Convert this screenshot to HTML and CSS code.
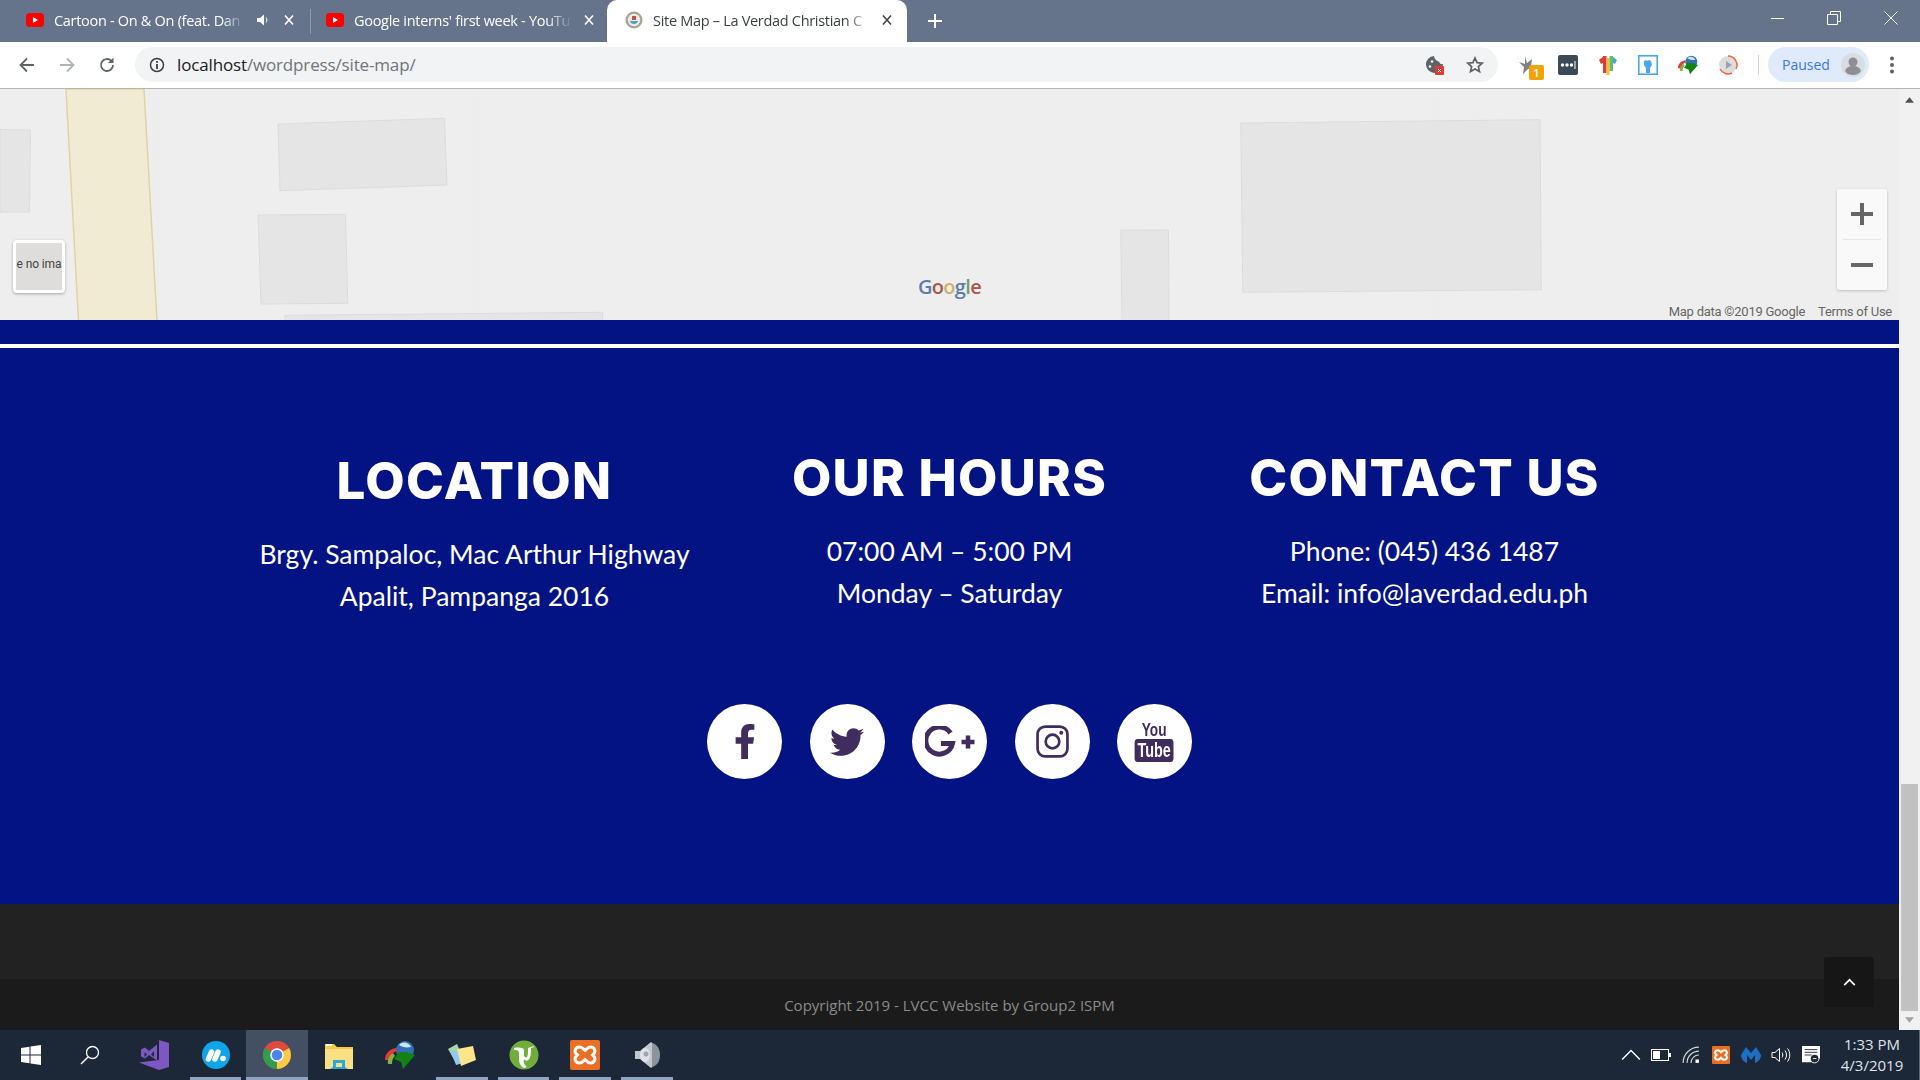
FILE: index.html
```html
<!DOCTYPE html>
<html lang="en">
<head>
    <meta charset="UTF-8">
    <title>Site Map – La Verdad Christian College</title>
    <link rel="stylesheet" href="styles.css">
</head>
<body>

<!-- browser tabs -->
<div class="tabbar">
    <div class="tab">
        <svg class="fav" viewBox="0 0 18 18"><rect y="2" width="18" height="14" rx="3.500" fill="#f00"/><path d="M7 6l5 3-5 3z" fill="#fff"/></svg>
        <span class="tab-title">Cartoon - On &amp; On (feat. Dan</span>
        <svg class="tab-audio" viewBox="0 0 14 14"><path d="M1 5h3l4-3.500v11L4 9H1z" fill="#fff"/><path d="M10 4.500c1.200 1.400 1.200 3.600 0 5" stroke="#fff" fill="none"/></svg>
        <svg class="tab-x" viewBox="0 0 12 12"><path d="M2 1.500l8 9M10 1.500l-8 9" stroke="#fff" stroke-width="1.600"/></svg>
    </div>
    <div class="tab tab-second">
        <svg class="fav" viewBox="0 0 18 18"><rect y="2" width="18" height="14" rx="3.500" fill="#f00"/><path d="M7 6l5 3-5 3z" fill="#fff"/></svg>
        <span class="tab-title">Google interns' first week - YouTu</span>
        <svg class="tab-x" viewBox="0 0 12 12"><path d="M2 1.500l8 9M10 1.500l-8 9" stroke="#fff" stroke-width="1.600"/></svg>
    </div>
    <div class="tab tab-active">
        <svg class="fav" viewBox="0 0 18 18"><circle cx="9" cy="9" r="8.500" fill="#a9a396"/><circle cx="9" cy="9" r="6.200" fill="#eeeae0"/><path d="M5 10h8c-.5 2-2 3-4 3s-3.500-1-4-3z" fill="#4f9bc4"/><path d="M7 5h4v4H7z" fill="#b5574f"/></svg>
        <span class="tab-title">Site Map – La Verdad Christian C</span>
        <svg class="tab-x" viewBox="0 0 12 12"><path d="M2 1.500l8 9M10 1.500l-8 9" stroke="#444" stroke-width="1.600"/></svg>
    </div>
    <svg class="tab-new" viewBox="0 0 16 16"><path d="M8 1v14M1 8h14" stroke="#fff" stroke-width="2"/></svg>
    <div class="window-btns">
        <svg viewBox="0 0 14 14"><path d="M1 7.500h13" stroke="#fff"/></svg>
        <svg viewBox="0 0 14 14"><path d="M.5 3.500h10v10H.5zM3.500 3.500V.5h10v10h-3" stroke="#fff" fill="none"/></svg>
        <svg viewBox="0 0 14 14"><path d="M.5.500l13 13M13.500.5l-13 13" stroke="#fff"/></svg>
    </div>
</div>

<!-- address bar -->
<div class="toolbar">
    <div class="nav-btns">
        <svg viewBox="0 0 18 18"><path d="M16 9H3M9 2.500L2.500 9 9 15.500" stroke="#5f6368" stroke-width="1.800" fill="none"/></svg>
        <svg viewBox="0 0 18 18"><path d="M2 9h13M9 2.500L15.500 9 9 15.500" stroke="#b1b4b8" stroke-width="1.800" fill="none"/></svg>
        <svg viewBox="0 0 18 18"><path d="M15 9a6 6 0 1 1-1.800-4.300" stroke="#5f6368" stroke-width="1.800" fill="none"/><path d="M15.500 1.500v5.500H10z" fill="#5f6368"/></svg>
    </div>
    <div class="omnibox">
        <svg class="omni-info" viewBox="0 0 16 16"><circle cx="8" cy="8" r="6.500" stroke="#3c4043" stroke-width="1.500" fill="none"/><path d="M8 7v5M8 4v1.800" stroke="#3c4043" stroke-width="1.800"/></svg>
        <span class="url"><span class="url-host">localhost</span>/wordpress/site-map/</span>
        <svg class="omni-cookie" viewBox="0 0 20 20"><path d="M9 1a8.500 8.500 0 1 0 9 8c-2 .5-3.500-.5-4-2.500C12 6.500 9.500 4 9 1z" fill="#5f6368"/><circle cx="7" cy="6.500" r="1.300" fill="#f1f3f4"/><circle cx="5" cy="11.500" r="1.300" fill="#f1f3f4"/><rect x="10" y="11" width="9" height="9" rx="1" fill="#e53935"/><path d="M13 14l3 3M16 14l-3 3" stroke="#fff"/></svg>
        <svg class="omni-star" viewBox="0 0 18 18"><path d="M9 2l2.100 4.700 5.100.5-3.800 3.400 1.100 5L9 13l-4.500 2.600 1.100-5L1.800 7.200l5.100-.5z" stroke="#5f6368" stroke-width="1.700" fill="none"/></svg>
    </div>
    <div class="ext-btns">
        <div class="ext">
            <svg viewBox="0 0 20 20"><path d="M7 1l2 7 5-4-1 7 3 1-6 2-5 5 1-7-5-5 6 2z" fill="#7d8288"/></svg>
            <span class="ext-badge">1</span>
        </div>
        <div class="ext"><svg viewBox="0 0 20 20"><rect width="20" height="20" rx="2" fill="#3b4a55"/><circle cx="4.500" cy="10" r="1.700" fill="#fff"/><circle cx="9" cy="10" r="1.700" fill="#fff"/><circle cx="13.500" cy="10" r="1.700" fill="#fff"/><path d="M17 6v8" stroke="#fff"/></svg></div>
        <div class="ext"><svg viewBox="0 0 20 20"><path d="M6 1L1 5l2 4 2-1z" fill="#e53935"/><path d="M14 1l5 4-2 4-2-1z" fill="#4aa3df"/><rect x="5" y="1" width="3.500" height="17" fill="#e53935"/><rect x="8.500" y="3" width="3" height="17" fill="#fbc02d"/><rect x="11.500" y="1" width="3.500" height="15" fill="#66bb6a"/></svg></div>
        <div class="ext"><svg viewBox="0 0 20 20"><rect x=".8" y=".8" width="18.400" height="18.400" fill="#fff" stroke="#4aa8ea" stroke-width="1.600"/><path d="M6 6l2-1 1 1 2-1 2 1 1 4-2 3v5H8v-5L6 10z" fill="#4aa8ea"/></svg></div>
        <div class="ext"><svg viewBox="0 0 30 30"><use href="#idm-icon"/></svg></div>
        <div class="ext"><svg viewBox="0 0 20 20"><circle cx="10" cy="10" r="9" fill="#dcdde0"/><path d="M10 1a9 9 0 0 1 8 13" stroke="#ea6a35" stroke-width="1.500" fill="none"/><path d="M2 14a9 9 0 0 0 12 4" stroke="#ea6a35" stroke-width="1.500" fill="none"/><path d="M8 6l6 4-6 4z" fill="#9ea3aa"/></svg></div>
    </div>
    <div class="toolbar-sep"></div>
    <div class="profile">
        <span>Paused</span>
        <svg viewBox="0 0 24 24"><circle cx="12" cy="12" r="12" fill="#dadce0"/><circle cx="12" cy="9" r="4.500" fill="#8c8f93"/><path d="M4 18c1-4 5-5 8-5s7 1 8 5c-2 3-5 4-8 4s-6-1-8-4z" fill="#8c8f93"/></svg>
    </div>
    <svg class="menu-dots" viewBox="0 0 6 20"><circle cx="3" cy="3.500" r="2" fill="#5f6368"/><circle cx="3" cy="10" r="2" fill="#5f6368"/><circle cx="3" cy="16.500" r="2" fill="#5f6368"/></svg>
</div>

<!-- page + scrollbar -->
<div class="viewport">
    <div class="page">

        <div class="map">
            <svg class="map-tiles" viewBox="0 88 1899 231" preserveAspectRatio="none">
                <path class="seam" d="M158 88v232M478 88v232M1120 88v232M1438 88v232"/>
                <polygon class="road" points="66,88 144,88 157,320 78.500,320"/>
                <polygon class="building" points="0,128.500 30.500,129 29.500,211 0,211"/>
                <polygon class="building" points="278,123 444.500,117.300 447,184 280,189.700"/>
                <polygon class="building" points="258,214 345.500,213.300 347.800,302.300 261,303"/>
                <polygon class="building" points="285,314.300 602.700,311.300 602.700,321 285,321"/>
                <polygon class="building" points="1240.800,122 1540,118.700 1541.300,288.700 1242.800,291.300"/>
                <polygon class="building" points="1120.800,229.300 1168.500,229 1169,321 1122,321"/>
            </svg>
            <div class="no-imagery"><span>e no ima</span></div>
            <div class="map-logo"><span class="g-blue">G</span><span class="g-red">o</span><span class="g-yellow">o</span><span class="g-blue">g</span><span class="g-green">l</span><span class="g-red">e</span></div>
            <div class="zoom-ctrl">
                <div class="zoom-btn"><svg viewBox="0 0 22 22"><path d="M11 0v22M0 11h22" stroke="#666" stroke-width="4"/></svg></div>
                <div class="zoom-btn zoom-minus"><svg viewBox="0 0 22 22"><path d="M0 11h22" stroke="#666" stroke-width="4"/></svg></div>
            </div>
            <div class="map-credits"><span>Map data ©2019 Google</span><span>Terms of Use</span></div>
        </div>

        <div class="footer-main">
            <hr class="footer-line">
            <div class="footer-cols">
                <div class="footer-col footer-col-low">
                    <h2>LOCATION</h2>
                    <p>Brgy. Sampaloc, Mac Arthur Highway</p>
                    <p>Apalit, Pampanga 2016</p>
                </div>
                <div class="footer-col">
                    <h2>OUR HOURS</h2>
                    <p>07:00 AM – 5:00 PM</p>
                    <p>Monday – Saturday</p>
                </div>
                <div class="footer-col">
                    <h2>CONTACT US</h2>
                    <p>Phone: (045) 436 1487</p>
                    <p>Email: info@laverdad.edu.ph</p>
                </div>
            </div>
            <div class="socials">
                <a class="social"><svg class="ico-fb" viewBox="0 0 320 512"><path d="M279.140 288l14.220-92.660h-88.910v-60.130c0-25.350 12.420-50.060 52.240-50.060h40.420V6.260S260.430 0 225.360 0c-73.220 0-121.080 44.380-121.080 124.720v70.620H22.890V288h81.390v224h100.170V288z"/></svg></a>
                <a class="social"><svg class="ico-tw" viewBox="0 0 512 512"><path d="M459.370 151.716c.325 4.548.325 9.097.325 13.645 0 138.720-105.583 298.558-298.558 298.558-59.452 0-114.680-17.219-161.137-47.106 8.447.974 16.568 1.299 25.340 1.299 49.055 0 94.213-16.568 130.274-44.832-46.132-.975-84.792-31.188-98.112-72.772 6.498.974 12.995 1.624 19.818 1.624 9.421 0 18.843-1.300 27.614-3.573-48.081-9.747-84.143-51.980-84.143-102.985v-1.299c13.969 7.797 30.214 12.670 47.431 13.319-28.264-18.843-46.781-51.005-46.781-87.391 0-19.492 5.197-37.360 14.294-52.954 51.655 63.675 129.300 105.258 216.365 109.807-1.624-7.797-2.599-15.918-2.599-24.040 0-57.828 46.782-104.934 104.934-104.934 30.213 0 57.502 12.670 76.670 33.137 23.715-4.548 46.456-13.320 66.599-25.340-7.798 24.366-24.366 44.833-46.132 57.827 21.117-2.273 41.584-8.122 60.426-16.243-14.292 20.791-32.161 39.308-52.628 54.253z"/></svg></a>
                <a class="social"><svg class="ico-gp" viewBox="0 0 50 32"><path d="M25.500 7A13.500 13.500 0 1 0 27.500 17.500H16" fill="none" stroke="#402d5e" stroke-width="5"/><path d="M43 9.500v13M36.500 16h13" stroke="#402d5e" stroke-width="4.500"/></svg></a>
                <a class="social"><svg class="ico-ig" viewBox="0 0 32 32"><rect x="1.500" y="1.500" width="29" height="29" rx="7.500" fill="none" stroke="#402d5e" stroke-width="2.600"/><circle cx="16" cy="16" r="6.600" fill="none" stroke="#402d5e" stroke-width="2.600"/><circle cx="24.500" cy="7.500" r="1.900" fill="#402d5e"/></svg></a>
                <a class="social"><div class="yt"><span class="yt-you">You</span><span class="yt-tube">Tube</span></div></a>
            </div>
        </div>

        <div class="footer-dark"></div>
        <div class="footer-copy">Copyright 2019 - LVCC Website by Group2 ISPM</div>
        <a class="back-top"><svg viewBox="0 0 14 9"><path d="M1 8l6-6 6 6" fill="none" stroke="#fff" stroke-width="2"/></svg></a>
    </div>
    <div class="scrollbar">
        <svg class="sb-arrow" viewBox="0 0 10 6"><path d="M5 0l5 6H0z" fill="#505050"/></svg>
        <div class="sb-space"></div>
        <div class="sb-thumb"></div>
        <svg class="sb-arrow" viewBox="0 0 10 6"><path d="M5 6l5-6H0z" fill="#a3a3a3"/></svg>
    </div>
</div>

<!-- windows taskbar -->
<div class="taskbar">
    <div class="task-item"><svg viewBox="0 0 20 20"><path d="M0 3l8.500-1.200V9.500H0zM9.500 1.600L20 0v9.500H9.500zM0 10.500h8.500v7.700L0 17zM9.500 10.500H20V20L9.500 18.400z" fill="#fff"/></svg></div>
    <div class="task-item task-search"><svg viewBox="0 0 20 20"><circle cx="12.500" cy="7.500" r="6" fill="none" stroke="#fff" stroke-width="1.300"/><path d="M8 12l-7 7" stroke="#fff" stroke-width="1.500"/></svg></div>
    <div class="task-item"><svg class="task-big" viewBox="0 0 30 30"><path d="M20 0l10 3v24l-10 3L0 22.500l20-2.500z" fill="#7d57c2"/><path d="M2 9.500l4-2 4 3.500 8-6.500v16l-8-5.500-4 3.500-4-2zM5.500 12v5l2.500-2.500zM12 14.500l3 2.500v-6z" fill="#7d57c2" fill-rule="evenodd"/></svg></div>
    <div class="task-item task-open"><svg class="task-big" viewBox="0 0 30 30"><circle cx="15" cy="15" r="14" fill="#0ea5ea"/><path d="M7.500 19l3-7M14 19l3-7" stroke="#fff" stroke-width="5.500" stroke-linecap="round"/><circle cx="22" cy="18.500" r="2.800" fill="#fff"/></svg></div>
    <div class="task-item task-active"><svg class="task-big" viewBox="0 0 30 30"><circle cx="15" cy="15" r="14" fill="#de4b3e"/><path d="M15 15L27.100 8A14 14 0 0 1 15 29z" fill="#fbcb43"/><path d="M15 15V29A14 14 0 0 1 2.900 8z" fill="#2f9e4f"/><circle cx="15" cy="15" r="6.800" fill="#fff"/><circle cx="15" cy="15" r="5.300" fill="#4a86e8"/></svg></div>
    <div class="task-item"><svg class="task-big" viewBox="0 0 30 30"><path d="M1 4h9l3 3h16v22H1z" fill="#f7c948"/><path d="M1 9h28v20H1z" fill="#fbdf85"/><path d="M2 4h6v2H2z" fill="#fff"/><path d="M9 27V20h12v7h-3v-4h-6v4z" fill="#29a8e0"/><path d="M6 29l3-2h12l3 2z" fill="#29a8e0"/></svg></div>
    <div class="task-item"><svg id="idm-icon" class="task-big" viewBox="0 0 30 30"><circle cx="20" cy="10" r="9" fill="#2f6fb3"/><path d="M14 5c3-4 10-3 12 2-5 1-9 0-12-2z" fill="#cfe3f3"/><path d="M0 20c0-7 5-11 11-12l1 3c-4 1-7 4-7 9z" fill="#e53935"/><path d="M3 24c-1-5 2-9 5-11l2 3c-2 2-3 4-3 8z" fill="#7cb342"/><path d="M14 12h7l9 3-12 14-2-7-7-3z" fill="#128212"/></svg></div>
    <div class="task-item task-open"><svg class="task-big" viewBox="0 0 30 30"><path d="M1 9l9-5 6 14-7 5z" fill="#a5d6a7"/><path d="M4 12l8-3 4 14-7 2z" fill="#90caf9"/><path d="M10 9l16-3 3 14-15 6z" fill="#fde58c"/></svg></div>
    <div class="task-item task-open"><svg class="task-big" viewBox="0 0 30 30"><circle cx="15" cy="15" r="14.500" fill="#6fae3b"/><path d="M5 10c4 0 5 1 5 3v6c0 3 1 7 5 9l3-1c-3-2-4-5-3-8 1 2 3 2 4 1 2-1 3-4 3-12l3-1v-1l-6 2c0 4 0 8-1 9s-3 0-3-2l0-5c0-2-4-3-10-2z" fill="#fff"/></svg></div>
    <div class="task-item task-open"><svg class="task-big" viewBox="0 0 30 30"><rect width="30" height="30" rx="2" fill="#ea6f25"/><path d="M9.500 7c-4 0-5.500 4-3.500 6.500l1.500 1.500L6 16.500C4 19 5.500 23 9.500 23c2.500 0 3.500-1.500 5.500-3.500 2 2 3 3.500 5.500 3.500 4 0 5.500-4 3.500-6.500L22.500 15l1.500-1.500C26 11 24.500 7 20.500 7 18 7 17 8.500 15 10.500 13 8.500 12 7 9.500 7z" fill="none" stroke="#fff" stroke-width="3"/></svg></div>
    <div class="task-item task-open"><svg class="task-big" viewBox="0 0 30 30"><path d="M3 11h5L19 2c4 3 6 8 6 13s-2 10-6 13L8 19H3z" fill="#c2c7cc"/><path d="M20 3c5 1 8 6 8 12s-3 11-8 12z" fill="#8d9499"/><ellipse cx="13" cy="15" rx="5" ry="7" fill="#dfe2e5"/><circle cx="14" cy="14" r="2.500" fill="#a0a5aa"/></svg></div>
    <div class="tray">
        <svg class="tray-icon" viewBox="0 0 18 10"><path d="M1 9l8-8 8 8" fill="none" stroke="#fff" stroke-width="1.200"/></svg>
        <svg class="tray-icon" viewBox="0 0 20 12"><rect x=".5" y=".5" width="17" height="11" fill="none" stroke="#fff"/><rect x="2" y="2" width="7" height="8" fill="#fff"/><rect x="18" y="4" width="2" height="4" fill="#fff"/></svg>
        <svg class="tray-icon" viewBox="0 0 16 16"><path d="M1 15A14 14 0 0 1 15 1M4.500 15A10.500 10.500 0 0 1 15 4.500M8 15A7 7 0 0 1 15 8" fill="none" stroke="#d8d8d8"/><rect x="12" y="12" width="3" height="3" fill="#fff"/></svg>
        <svg class="tray-icon" viewBox="0 0 30 30"><rect width="30" height="30" rx="2" fill="#ea6f25"/><path d="M9.500 7c-4 0-5.500 4-3.500 6.500l1.500 1.500L6 16.500C4 19 5.500 23 9.500 23c2.500 0 3.500-1.500 5.500-3.500 2 2 3 3.500 5.500 3.500 4 0 5.500-4 3.500-6.500L22.500 15l1.500-1.500C26 11 24.500 7 20.500 7 18 7 17 8.500 15 10.500 13 8.500 12 7 9.500 7z" fill="none" stroke="#fff" stroke-width="3.500"/></svg>
        <svg class="tray-icon" viewBox="0 0 20 18"><path d="M5 1L0 9c0 4 3 7 6 8V9l4 5 4-5v8c3-1 6-4 6-8l-5-8-5 6z" fill="#1d6fc4"/></svg>
        <svg class="tray-icon" viewBox="0 0 20 16"><path d="M1 5.500h3L8.500 1.500v13L4 10.500H1z" fill="none" stroke="#fff"/><path d="M11 5.500c1 1.500 1 3.500 0 5M14 3.500c2 2.500 2 6.500 0 9M16.500 1.500c3 3.500 3 9.500 0 13" fill="none" stroke="#fff"/></svg>
        <svg class="tray-icon" viewBox="0 0 20 20"><path d="M0 0h20v14a6 6 0 0 0-8 4H0z" fill="#fff"/><path d="M3 4h14M3 7h14M3 10h8" stroke="#1c2838"/><circle cx="14" cy="14" r="4.800" fill="#1c2838" stroke="#fff"/><path d="M12 14h4" stroke="#fff"/></svg>
        <div class="clock"><span>1:33 PM</span><span>4/3/2019</span></div>
    </div>
</div>

</body>
</html>
```

FILE: styles.css
```css
* {
    box-sizing: border-box;
}

html,
body {
    margin: 0;
    height: 1080px;
    overflow: hidden;
}

body {
    display: flex;
    flex-direction: column;
    font-family: "Open Sans", sans-serif;
    background-color: #fff;
}

svg {
    display: block;
    flex: none;
}

/* tabs */
.tabbar {
    height: 42px;
    display: flex;
    align-items: center;
    background-color: #65748a;
    padding-left: 8px;
    position: relative;
    flex: none;
}

.tab {
    width: 303px;
    height: 42px;
    display: flex;
    align-items: center;
    padding: 0 0 2px 18px;
    color: #fff;
    font-size: 14px;
    flex: none;
}

.tab-second {
    width: 296px;
    padding-left: 15px;
    position: relative;
}

.tab-second::before {
    content: "";
    position: absolute;
    left: -1px;
    top: 9px;
    height: 25px;
    width: 1px;
    background-color: #8d9aab;
}

.tab-active {
    width: 300px;
    padding-left: 18px;
    background-color: #fff;
    color: #3c4043;
    border-radius: 10px 10px 0 0;
}

.fav {
    width: 18px;
    height: 18px;
}

.tab-title {
    margin-left: 10px;
    width: 191px;
    white-space: nowrap;
    -webkit-mask-image: linear-gradient(to right, #000 88%, transparent);
    mask-image: linear-gradient(to right, #000 88%, transparent);
    font-size: 14.500px;
    letter-spacing: -0.3px;
}

.tab-second .tab-title,
.tab-active .tab-title {
    width: 219px;
}

.tab-audio {
    width: 14px;
    height: 14px;
    margin-left: 11px;
}

.tab-x {
    width: 12px;
    height: 12px;
    margin-left: 13px;
}

.tab-second .tab-x {
    margin-left: 10px;
}

.tab-active .tab-x {
    margin-left: 9px;
}

.tab-new {
    width: 16px;
    height: 16px;
    margin-left: 20px;
}

.window-btns {
    margin-left: auto;
    display: flex;
    align-items: center;
    gap: 43px;
    padding-right: 22px;
    margin-top: -6px;
}

.window-btns svg {
    width: 14px;
    height: 14px;
}

/* address bar */
.toolbar {
    height: 47px;
    display: flex;
    align-items: center;
    background-color: #fff;
    border-bottom: 1px solid #b5b5b5;
    padding: 0 0 1px 7px;
    flex: none;
}

.nav-btns {
    display: flex;
    width: 120px;
}

.nav-btns svg {
    width: 18px;
    height: 18px;
    margin: 0 11px;
}

.omnibox {
    margin-left: 8px;
    width: 1363px;
    height: 35px;
    border-radius: 18px;
    background-color: #f1f3f4;
    display: flex;
    align-items: center;
    padding-left: 14px;
}

.omni-info {
    width: 16px;
    height: 16px;
}

.url {
    margin-left: 12px;
    font-size: 17px;
    color: #70757a;
    letter-spacing: -0.15px;
}

.url-host {
    color: #202124;
}

.omni-cookie {
    width: 20px;
    height: 20px;
    margin-left: auto;
}

.omni-star {
    width: 18px;
    height: 18px;
    margin: 0 14px 0 21px;
}

.ext-btns {
    display: flex;
    margin-left: 10px;
}

.ext {
    width: 40px;
    display: flex;
    justify-content: center;
    position: relative;
}

.ext svg {
    width: 20px;
    height: 20px;
}

.ext-badge {
    position: absolute;
    left: 21px;
    top: 10px;
    width: 15px;
    height: 15px;
    background-color: #f0a30a;
    border-radius: 2px;
    color: #fff;
    font-size: 11px;
    font-weight: 600;
    line-height: 15px;
    text-align: center;
}

.toolbar-sep {
    width: 1px;
    height: 20px;
    margin-left: 10px;
    background-color: #d0d3d7;
}

.profile {
    margin-left: 9px;
    width: 101px;
    height: 35px;
    border-radius: 18px;
    background-color: #dfeafa;
    display: flex;
    align-items: center;
    padding-left: 14px;
    color: #3b78e7;
    font-size: 14px;
}

.profile svg {
    width: 24px;
    height: 24px;
    margin-left: 11px;
}

.menu-dots {
    width: 6px;
    height: 20px;
    margin-left: 20px;
}

/* page */
.viewport {
    height: 941px;
    display: flex;
    flex: none;
}

.page {
    width: 1899px;
    display: flex;
    flex-direction: column;
    position: relative;
}

.map {
    height: 231px;
    position: relative;
    background-color: #eeeeee;
    overflow: hidden;
    flex: none;
}

.map-tiles {
    width: 100%;
    height: 100%;
}

.seam {
    stroke: #ececec;
    fill: none;
}

.road {
    fill: #f0ebd2;
    stroke: #e0d3a8;
    stroke-width: 1.500;
}

.building {
    fill: #e5e5e5;
    stroke: #dcdcdc;
}

.no-imagery {
    position: absolute;
    left: 13px;
    top: 151px;
    width: 52px;
    height: 53px;
    padding-bottom: 5px;
    border: 3px solid #fff;
    border-radius: 4px;
    background-color: #dedddb;
    box-shadow: 0 1px 3px rgba(0, 0, 0, 0.3);
    display: flex;
    align-items: center;
    justify-content: center;
    font-family: "Roboto", sans-serif;
    font-size: 12px;
    letter-spacing: -0.1px;
    color: #444;
    white-space: nowrap;
}

.map-logo {
    position: absolute;
    left: 918px;
    top: 184px;
    font-family: "Open Sans", sans-serif;
    font-size: 20px;
    font-weight: 600;
    line-height: 28px;
    letter-spacing: -0.7px;
}

.g-blue { color: #5c7bb0; }
.g-red { color: #b0544a; }
.g-yellow { color: #cdb36a; }
.g-green { color: #6b9e6e; }

.zoom-ctrl {
    position: absolute;
    left: 1837px;
    top: 100px;
    width: 50px;
    height: 101px;
    background-color: #f9f9f9;
    border-radius: 2px;
    box-shadow: 0 1px 3px rgba(0, 0, 0, 0.2);
}

.zoom-btn {
    height: 50px;
    display: flex;
    align-items: center;
    justify-content: center;
}

.zoom-btn svg {
    width: 22px;
    height: 22px;
}

.zoom-minus {
    height: 51px;
    border-top: 1px solid #e6e6e6;
    margin: 0 6px;
}

.map-credits {
    position: absolute;
    right: 7px;
    bottom: -1px;
    display: flex;
    gap: 13px;
    font-family: "Roboto", sans-serif;
    font-size: 13px;
    line-height: 18px;
    color: #666;
    letter-spacing: -0.25px;
}

/* footer */
.footer-main {
    height: 584px;
    background-color: #041384;
    padding-top: 24px;
    color: #fff;
    flex: none;
}

.footer-line {
    height: 4px;
    border: 0;
    margin: 0;
    background-color: #fff;
}

.footer-cols {
    display: flex;
    justify-content: center;
    padding-top: 100px;
}

.footer-col {
    width: 475px;
    text-align: center;
}

.footer-col-low {
    padding-top: 3px;
}

.footer-col h2 {
    margin: 0 0 22px;
    font-family: "Inter", sans-serif;
    font-size: 51px;
    font-weight: 800;
    line-height: 60px;
    letter-spacing: 1.300px;
}

.footer-col p {
    margin: 0;
    font-family: "Lato", sans-serif;
    font-size: 26.500px;
    line-height: 42px;
}

.socials {
    display: flex;
    justify-content: center;
    gap: 27.500px;
    margin-top: 87px;
}

.social {
    width: 75px;
    height: 75px;
    border-radius: 50%;
    background-color: #fff;
    display: flex;
    align-items: center;
    justify-content: center;
}

.social svg {
    fill: #402d5e;
}

.ico-fb {
    width: 22px;
    height: 35px;
}

.ico-tw {
    width: 34px;
    height: 34px;
}

.ico-gp {
    width: 50px;
    height: 32px;
}

.ico-ig {
    width: 33px;
    height: 33px;
}

.yt {
    display: flex;
    flex-direction: column;
    align-items: center;
    font-family: "Liberation Sans", sans-serif;
    font-weight: 700;
    color: #402d5e;
    transform: scaleX(0.72);
}

.yt-you {
    font-size: 19px;
    line-height: 18px;
}

.yt-tube {
    font-size: 20px;
    line-height: 23px;
    padding: 0 4px;
    border-radius: 4px;
    background-color: #402d5e;
    color: #fff;
}

.footer-dark {
    height: 75px;
    background-color: #222222;
    flex: none;
}

.footer-copy {
    height: 51px;
    padding-top: 1px;
    background-color: #1b1b1b;
    color: #8a8a8a;
    font-size: 15px;
    line-height: 51px;
    text-align: center;
    flex: none;
}

.back-top {
    position: absolute;
    left: 1824px;
    top: 868px;
    width: 50px;
    height: 50px;
    border-radius: 3px;
    background-color: #161616;
    display: flex;
    align-items: center;
    justify-content: center;
}

.back-top svg {
    width: 13px;
    height: 8px;
}

/* scrollbar */
.scrollbar {
    width: 21px;
    background-color: #f1f1f1;
    display: flex;
    flex-direction: column;
    align-items: center;
    padding-top: 8px;
}

.sb-arrow {
    width: 9px;
    height: 6px;
}

.sb-space {
    height: 681px;
}

.sb-thumb {
    width: 17px;
    height: 227px;
    background-color: #c1c1c1;
    margin-bottom: 6px;
}

/* taskbar */
.taskbar {
    height: 50px;
    display: flex;
    background-color: #1c2838;
    flex: none;
}

.task-item {
    width: 61.600px;
    height: 50px;
    display: flex;
    align-items: center;
    justify-content: center;
    position: relative;
    flex: none;
}

.task-item svg {
    width: 20px;
    height: 20px;
}

.task-item .task-big {
    width: 30px;
    height: 30px;
}

.task-search {
    padding-right: 5px;
}

.task-open::after {
    content: "";
    position: absolute;
    left: 5px;
    right: 5px;
    bottom: 0;
    height: 3px;
    background-color: #8fa3c2;
}

.task-active {
    background-color: #434f63;
}

.task-active::after {
    content: "";
    position: absolute;
    left: 0;
    right: 0;
    bottom: 0;
    height: 3px;
    background-color: #8fa3c2;
}

.tray {
    margin-left: auto;
    display: flex;
    align-items: center;
    padding-right: 6px;
    border-right: 1px solid #5d6878;
}

.tray-icon {
    width: 20px;
    height: 18px;
    margin-right: 10px;
}

.clock {
    width: 82px;
    display: flex;
    flex-direction: column;
    align-items: center;
    color: #dfe3e8;
    font-size: 15px;
    line-height: 21px;
}
```
